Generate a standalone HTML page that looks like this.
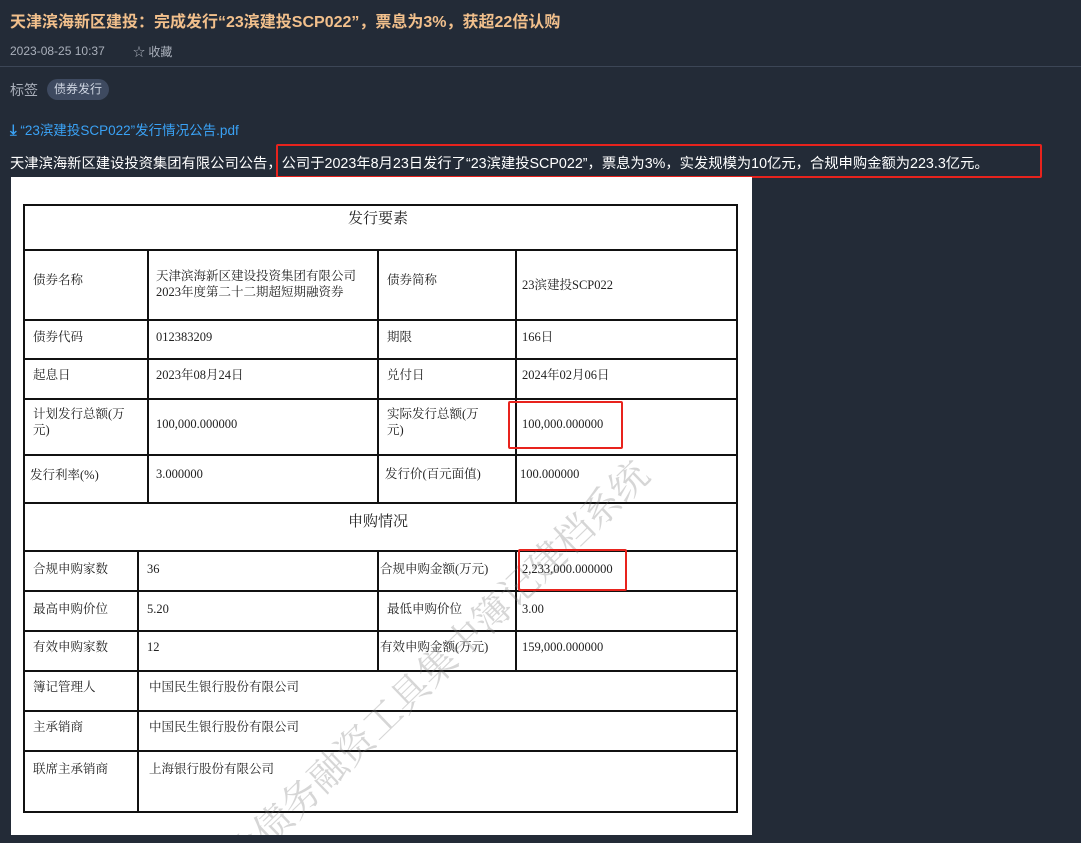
<!DOCTYPE html><html><head><meta charset="utf-8"><style>
html,body{margin:0;width:1081px;height:843px;overflow:hidden}
body{background:#232b37;font-family:"Liberation Sans","Noto Sans CJK SC",sans-serif;position:relative}
.a{position:absolute;white-space:nowrap}
.t{font-family:"Liberation Serif","Noto Serif CJK SC",serif;font-size:12.5px;color:#222;position:absolute;white-space:nowrap;line-height:16px}
.h{position:absolute;background:#111;height:2px}
.v{position:absolute;background:#111;width:2px}
.r{position:absolute;border:2px solid #e8231d;border-radius:2px}
</style></head><body>
<div class="a" style="left:10px;top:8px;font-size:16px;font-weight:bold;color:#f2c08c">天津滨海新区建投：完成发行“23滨建投SCP022”，票息为3%，获超22倍认购</div>
<div class="a" style="left:10px;top:44px;font-size:12px;color:#aab0bb">2023-08-25 10:37</div>
<div class="a" style="left:133px;top:43px;font-size:12px;color:#aab0bb">☆ 收藏</div>
<div class="a" style="left:0;top:66px;width:1081px;height:1px;background:#3c4656"></div>
<div class="a" style="left:10px;top:80px;font-size:14px;color:#aab0bb">标签</div>
<div class="a" style="left:47px;top:79px;padding:0 7px;height:21px;line-height:21px;border-radius:11px;background:#3e4a60;font-size:12px;color:#cfd6e2">债券发行</div>
<div class="a" style="left:10px;top:119px;font-size:13.5px;color:#3aa2f5"><b style="font-size:15px">⤓</b> “23滨建投SCP022”发行情况公告.pdf</div>
<div class="a" style="left:10px;top:152px;font-size:14.3px;color:#fff;font-weight:normal">天津滨海新区建设投资集团有限公司公告，公司于2023年8月23日发行了“23滨建投SCP022”，票息为3%，实发规模为10亿元，合规申购金额为223.3亿元。</div>
<div class="r" style="left:276px;top:144px;width:762px;height:30px"></div>
<div class="a" style="left:11px;top:177px;width:741px;height:658px;background:#fff"></div>
<div class="h" style="left:23px;top:204px;width:715px"></div>
<div class="h" style="left:23px;top:249px;width:715px"></div>
<div class="h" style="left:23px;top:319px;width:715px"></div>
<div class="h" style="left:23px;top:358px;width:715px"></div>
<div class="h" style="left:23px;top:398px;width:715px"></div>
<div class="h" style="left:23px;top:454px;width:715px"></div>
<div class="h" style="left:23px;top:502px;width:715px"></div>
<div class="h" style="left:23px;top:550px;width:715px"></div>
<div class="h" style="left:23px;top:590px;width:715px"></div>
<div class="h" style="left:23px;top:630px;width:715px"></div>
<div class="h" style="left:23px;top:670px;width:715px"></div>
<div class="h" style="left:23px;top:710px;width:715px"></div>
<div class="h" style="left:23px;top:750px;width:715px"></div>
<div class="h" style="left:23px;top:811px;width:715px"></div>
<div class="v" style="left:23px;top:204px;height:609px"></div>
<div class="v" style="left:736px;top:204px;height:609px"></div>
<div class="v" style="left:147px;top:249px;height:255px"></div>
<div class="v" style="left:377px;top:249px;height:255px"></div>
<div class="v" style="left:515px;top:249px;height:255px"></div>
<div class="v" style="left:137px;top:550px;height:262px"></div>
<div class="v" style="left:377px;top:550px;height:122px"></div>
<div class="v" style="left:515px;top:550px;height:122px"></div>
<div class="t" style="left:348px;top:211px;font-size:15px">发行要素</div>
<div class="t" style="left:33px;top:272px">债券名称</div>
<div class="t" style="left:156px;top:268px">天津滨海新区建设投资集团有限公司<br>2023年度第二十二期超短期融资券</div>
<div class="t" style="left:387px;top:272px">债券简称</div>
<div class="t" style="left:522px;top:277px">23滨建投SCP022</div>
<div class="t" style="left:33px;top:329px">债券代码</div>
<div class="t" style="left:156px;top:329px">012383209</div>
<div class="t" style="left:387px;top:329px">期限</div>
<div class="t" style="left:522px;top:329px">166日</div>
<div class="t" style="left:33px;top:367px">起息日</div>
<div class="t" style="left:156px;top:367px">2023年08月24日</div>
<div class="t" style="left:387px;top:367px">兑付日</div>
<div class="t" style="left:522px;top:367px">2024年02月06日</div>
<div class="t" style="left:33px;top:406px">计划发行总额(万<br>元)</div>
<div class="t" style="left:156px;top:416px">100,000.000000</div>
<div class="t" style="left:387px;top:406px">实际发行总额(万<br>元)</div>
<div class="t" style="left:522px;top:416px">100,000.000000</div>
<div class="t" style="left:30px;top:467px">发行利率(%)</div>
<div class="t" style="left:156px;top:466px">3.000000</div>
<div class="t" style="left:385px;top:466px">发行价(百元面值)</div>
<div class="t" style="left:520px;top:466px">100.000000</div>
<div class="t" style="left:348px;top:514px;font-size:15px">申购情况</div>
<div class="t" style="left:33px;top:561px">合规申购家数</div>
<div class="t" style="left:147px;top:561px">36</div>
<div class="t" style="left:380px;top:561px">合规申购金额(万元)</div>
<div class="t" style="left:522px;top:561px">2,233,000.000000</div>
<div class="t" style="left:33px;top:601px">最高申购价位</div>
<div class="t" style="left:147px;top:601px">5.20</div>
<div class="t" style="left:387px;top:601px">最低申购价位</div>
<div class="t" style="left:522px;top:601px">3.00</div>
<div class="t" style="left:33px;top:639px">有效申购家数</div>
<div class="t" style="left:147px;top:639px">12</div>
<div class="t" style="left:380px;top:639px">有效申购金额(万元)</div>
<div class="t" style="left:522px;top:639px">159,000.000000</div>
<div class="t" style="left:33px;top:679px">簿记管理人</div>
<div class="t" style="left:149px;top:679px">中国民生银行股份有限公司</div>
<div class="t" style="left:33px;top:719px">主承销商</div>
<div class="t" style="left:149px;top:719px">中国民生银行股份有限公司</div>
<div class="t" style="left:33px;top:761px">联席主承销商</div>
<div class="t" style="left:149px;top:761px">上海银行股份有限公司</div>
<div class="a" style="left:11px;top:177px;width:741px;height:658px;overflow:hidden">
<div class="a" style="left:200px;top:665px;font-family:'Noto Serif CJK SC',serif;font-size:38px;color:rgba(120,120,120,0.3);transform:rotate(-44deg);transform-origin:left top">业债务融资工具集中簿记建档系统</div>
</div>
<div class="r" style="left:508px;top:401px;width:111px;height:44px"></div>
<div class="r" style="left:518px;top:549px;width:105px;height:38px"></div>
</body></html>
